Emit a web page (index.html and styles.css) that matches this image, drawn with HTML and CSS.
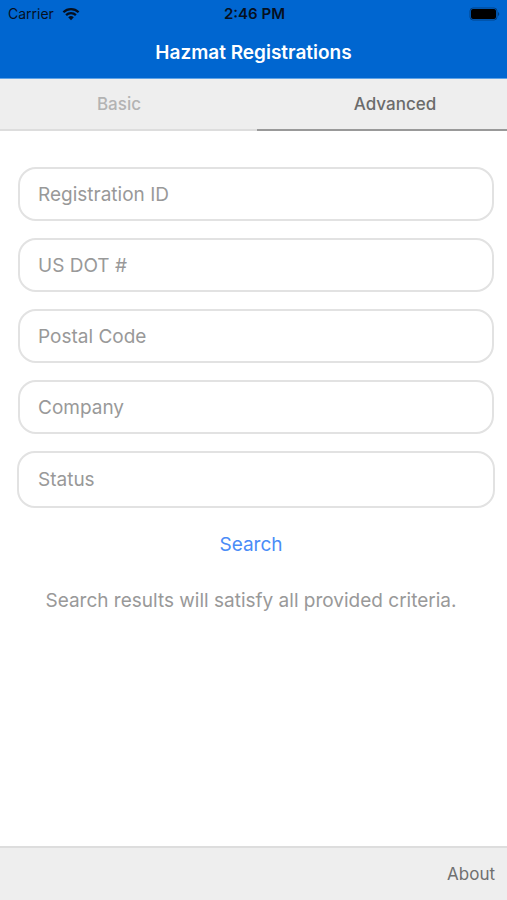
FILE: index.html
```html
<!DOCTYPE html>
<html lang="en">
<head>
<meta charset="utf-8">
<meta name="viewport" content="width=device-width, initial-scale=1">
<title>Hazmat Registrations</title>
<link rel="stylesheet" href="styles.css">
</head>
<body>
<header class="header">
  <div class="status-bar">
    <div class="carrier">
      <span>Carrier</span>
      <svg class="wifi" viewBox="0 0 18 14" aria-hidden="true">
        <path d="M1.4 5.2a10.8 10.8 0 0 1 15.2 0M4.1 8.1a7 7 0 0 1 9.8 0" fill="none" stroke="currentColor" stroke-width="2.3"/>
        <path d="M9 13.2 6.2 10.3a4 4 0 0 1 5.6 0z" fill="currentColor"/>
      </svg>
    </div>
    <time class="clock">2:46 PM</time>
    <svg class="battery" viewBox="0 0 32 14" aria-hidden="true">
      <rect x="1" y="1" width="27" height="12" rx="3" fill="none" stroke="currentColor" stroke-opacity=".35"/>
      <rect x="2" y="2" width="25" height="10" rx="2" fill="currentColor"/>
      <path d="M29 5a2.2 2.2 0 0 1 0 4z" fill="currentColor" fill-opacity=".4"/>
    </svg>
  </div>
  <h1 class="title">Hazmat Registrations</h1>
</header>
<nav class="tabs">
  <button class="tab tab-basic" type="button">Basic</button>
  <button class="tab tab-advanced" type="button" aria-current="page">Advanced</button>
</nav>
<main class="content">
  <form class="form">
    <input class="field" type="text" placeholder="Registration ID" aria-label="Registration ID">
    <input class="field" type="text" placeholder="US DOT #" aria-label="US DOT #">
    <input class="field" type="text" placeholder="Postal Code" aria-label="Postal Code">
    <input class="field" type="text" placeholder="Company" aria-label="Company">
    <select class="field field-select" aria-label="Status">
      <option>Status</option>
    </select>
    <button class="search" type="button">Search</button>
  </form>
  <p class="hint">Search results will satisfy all provided criteria.</p>
</main>
<footer class="footer">
  <a class="about" href="#about">About</a>
</footer>
</body>
</html>
```
FILE: styles.css
```css
* {
  box-sizing: border-box;
}

body {
  margin: 0;
  min-height: 100vh;
  display: flex;
  flex-direction: column;
  background: #fff;
  color: #999;
  font-family: Inter, "Liberation Sans", sans-serif;
  font-size: 19px;
}

button,
input,
select {
  margin: 0;
  font: inherit;
}

.header {
  height: 79px;
  background: #0066d0;
  border-bottom: 1px solid #5fa3e6;
}

.status-bar {
  display: grid;
  grid-template-columns: 1fr auto 1fr;
  align-items: center;
  height: 27px;
  padding: 0 6px 0 8px;
  color: #06101f;
  font-size: 14px;
}

.carrier {
  display: flex;
  align-items: center;
  gap: 8px;
}

.wifi {
  width: 18px;
  height: 14px;
}

.clock {
  font-size: 15px;
  font-weight: 600;
}

.battery {
  width: 32px;
  height: 14px;
  justify-self: end;
  color: #000;
}

.title {
  margin: 0;
  color: #fff;
  font-size: 19px;
  font-weight: 600;
  line-height: 51px;
  text-align: center;
}

.tabs {
  display: grid;
  grid-template-columns: 257fr 250fr;
  height: 52px;
  background: #eee;
}

.tab {
  border: 0;
  border-bottom: 2px solid #ddd;
  background: none;
  color: #b3b3b3;
  font-size: 17px;
  font-weight: 500;
}

.tab-basic {
  padding: 0 19px 0 0;
}

.tab-advanced {
  padding: 0 0 0 26px;
  border-bottom-color: #999;
  color: #6b6b6b;
}

.content {
  flex: 1;
  padding: 36px 12px 0 17px;
}

.form {
  display: flex;
  flex-direction: column;
  gap: 17px;
}

.field {
  height: 54px;
  margin: 0 1px;
  padding: 0 18px;
  border: 2px solid #e2e2e2;
  border-radius: 18px;
  background: #fff;
  color: #999;
}

.field::placeholder {
  color: #999;
  opacity: 1;
}

.field-select {
  height: 57px;
  margin: 0;
  padding: 0 19px;
  appearance: none;
}

.search {
  align-self: center;
  margin-right: 10px;
  padding: 8px 16px;
  border: 0;
  background: none;
  color: #4a8cf7;
  line-height: 24px;
}

.hint {
  margin: 24px 10px 0 0;
  line-height: 24px;
  text-align: center;
}

.footer {
  display: flex;
  align-items: center;
  justify-content: flex-end;
  height: 54px;
  padding: 0 12px;
  border-top: 2px solid #ddd;
  background: #eee;
}

.about {
  color: #707070;
  font-size: 17px;
  text-decoration: none;
}
```
